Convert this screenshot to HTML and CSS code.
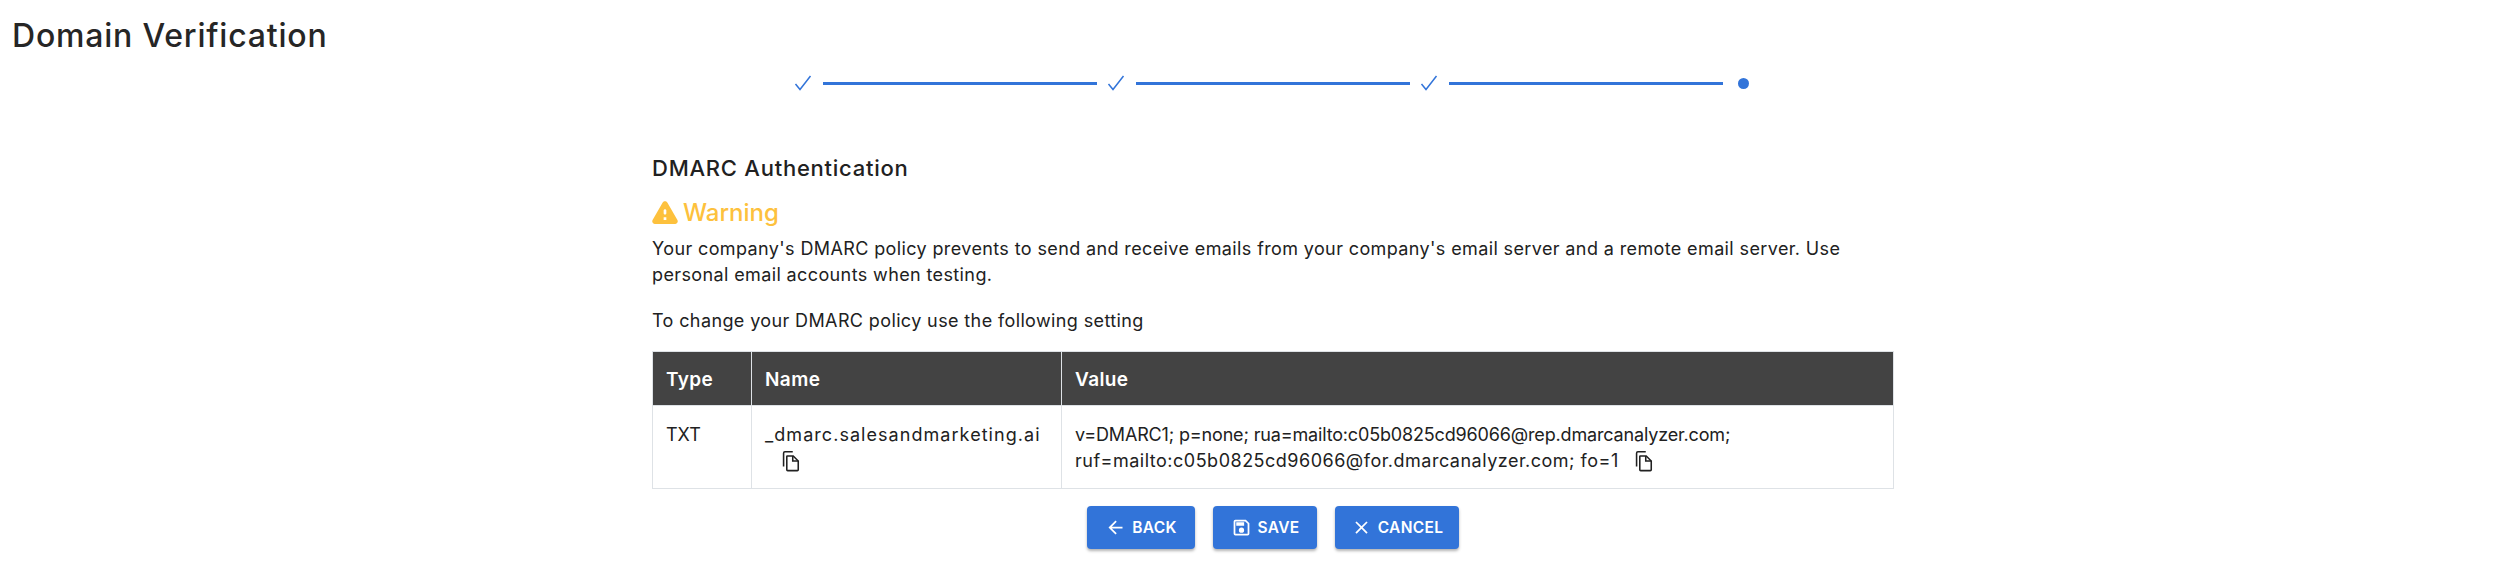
FILE: index.html
```html
<!DOCTYPE html>
<html lang="en">
<head>
    <meta charset="UTF-8" />
    <title>Domain Verification</title>
    <link rel="stylesheet" href="styles.css">
</head>
<body>
    <h1 class="page-title">Domain Verification</h1>

    <div class="stepper">
        <svg class="step-check" viewBox="0 0 18 18"><path d="M1.5 10 L6 15.5 L16.5 2"/></svg>
        <div class="step-line"></div>
        <svg class="step-check" viewBox="0 0 18 18"><path d="M1.5 10 L6 15.5 L16.5 2"/></svg>
        <div class="step-line"></div>
        <svg class="step-check" viewBox="0 0 18 18"><path d="M1.5 10 L6 15.5 L16.5 2"/></svg>
        <div class="step-line"></div>
        <div class="step-dot"></div>
    </div>

    <div class="content">
        <h2 class="section-title">DMARC Authentication</h2>
        <div class="warning">
            <svg class="warning-icon" viewBox="2.3 3.9 19.4 17.1"><path d="M4.47 21h15.06c1.54 0 2.5-1.67 1.73-3L13.73 4.99c-.77-1.33-2.69-1.33-3.46 0L2.74 18c-.77 1.33.19 3 1.73 3zM12 14c-.55 0-1-.45-1-1v-2c0-.55.45-1 1-1s1 .45 1 1v2c0 .55-.45 1-1 1zm1 4h-2v-2h2v2z"/></svg>
            <span>Warning</span>
        </div>
        <p class="note">Your company's DMARC policy prevents to send and receive emails from your company's email server and a remote email server. Use personal email accounts when testing.</p>
        <p class="note note-setting">To change your DMARC policy use the following setting</p>

        <table class="dns-table">
            <thead>
                <tr>
                    <th class="col-type">Type</th>
                    <th class="col-name">Name</th>
                    <th>Value</th>
                </tr>
            </thead>
            <tbody>
                <tr>
                    <td>TXT</td>
                    <td class="cell-name">_dmarc.salesandmarketing.ai<br>
                        <svg class="copy-icon copy-below" viewBox="0 0 24 24"><path d="M15 2H6.5A1.5 1.5 0 0 0 5 3.5V18"/><path d="M9 6.5h6.5L21 12v9.5a1 1 0 0 1-1 1H9.5a1 1 0 0 1-1-1V7a.5.5 0 0 1 .5-.5z"/><path d="M15 6.5V12h6"/></svg>
                    </td>
                    <td class="cell-value">v=DMARC1; p=none; rua=mailto:c05b0825cd96066@rep.dmarcanalyzer.com;<br>
                        <span class="value-second">ruf=mailto:c05b0825cd96066@for.dmarcanalyzer.com; fo=1</span>
                        <svg class="copy-icon copy-inline" viewBox="0 0 24 24"><path d="M15 2H6.5A1.5 1.5 0 0 0 5 3.5V18"/><path d="M9 6.5h6.5L21 12v9.5a1 1 0 0 1-1 1H9.5a1 1 0 0 1-1-1V7a.5.5 0 0 1 .5-.5z"/><path d="M15 6.5V12h6"/></svg>
                    </td>
                </tr>
            </tbody>
        </table>

        <div class="actions">
            <button class="btn btn-back">
                <svg viewBox="0 0 24 24"><path d="M20 11H7.83l5.59-5.59L12 4l-8 8 8 8 1.41-1.41L7.83 13H20v-2z"/></svg>
                Back
            </button>
            <button class="btn btn-save">
                <svg viewBox="0 0 24 24"><path d="M17 3H5a2 2 0 0 0-2 2v14a2 2 0 0 0 2 2h14a2 2 0 0 0 2-2V7l-4-4zm2 16H5V5h11.17L19 7.83V19zm-7-7a3 3 0 1 0 0 6 3 3 0 0 0 0-6zM6 6h9v4H6V6z"/></svg>
                Save
            </button>
            <button class="btn btn-cancel">
                <svg viewBox="0 0 24 24"><path d="M19 6.41 17.59 5 12 10.59 6.41 5 5 6.41 10.59 12 5 17.59 6.41 19 12 13.41 17.59 19 19 17.59 13.41 12z"/></svg>
                Cancel
            </button>
        </div>
    </div>
</body>
</html>
```

FILE: styles.css
```css
body {
    margin: 0;
    background-color: #fff;
    color: #212121;
    font-family: Inter, "Noto Sans", Arial, sans-serif;
    height: 580px;
    overflow: hidden;
}
.page-title {
    margin: 0;
    padding: 14px 0 0 12px;
    font-size: 32px;
    line-height: 44px;
    font-weight: 500;
    letter-spacing: 0.8px;
    color: #262626;
}
.stepper {
    display: flex;
    align-items: center;
    margin: 7px 0 0 794px;
    height: 36px;
}
.step-check {
    width: 18px;
    height: 18px;
    flex: none;
}
.step-check path {
    fill: none;
    stroke: #3274d9;
    stroke-width: 1.5;
}
.step-line {
    flex: none;
    width: 274px;
    height: 3px;
    margin: 0 10px 0 11px;
    background-color: #3274d9;
}
.step-dot {
    flex: none;
    width: 11px;
    height: 11px;
    margin-left: 5px;
    border-radius: 50%;
    background-color: #3274d9;
}
.content {
    width: 1242px;
    margin: 0 0 0 652px;
}
.section-title {
    margin: 52px 0 0;
    font-size: 22px;
    line-height: 30px;
    font-weight: 500;
    letter-spacing: 0.75px;
    color: #212121;
}
.warning {
    display: flex;
    align-items: center;
    gap: 5px;
    margin-top: 11px;
    height: 36px;
    font-size: 24px;
    font-weight: 500;
    color: #fdc13d;
}
.warning-icon {
    width: 26px;
    height: 23px;
    fill: #fdc13d;
}
.note {
    margin: 6px 0 0;
    font-size: 18px;
    line-height: 26px;
    letter-spacing: 0.38px;
    color: #212121;
}
.note-setting {
    margin-top: 20px;
}
.dns-table {
    width: 1242px;
    margin-top: 17px;
    border-collapse: collapse;
    table-layout: fixed;
    font-size: 18px;
    line-height: 26px;
}
.dns-table th {
    height: 51px;
    padding: 2px 13px 0;
    border: 1px solid #dee2e6;
    background-color: #434343;
    color: #fff;
    font-size: 19px;
    letter-spacing: 0.4px;
    text-align: left;
    font-weight: 600;
}
.dns-table td {
    box-sizing: border-box;
    height: 83px;
    padding: 16px 13px 0;
    border: 1px solid #dee2e6;
    vertical-align: top;
    color: #212121;
}
.col-type {
    width: 72px;
}
.col-name {
    width: 283px;
}
.cell-name {
    letter-spacing: 1.05px;
}
.cell-value {
    letter-spacing: -0.16px;
}
.value-second {
    letter-spacing: 0.5px;
}
.copy-icon {
    width: 22px;
    height: 22px;
    fill: none;
    stroke: #212121;
    stroke-width: 1.7;
    vertical-align: -5px;
}
.copy-below {
    margin-left: 14px;
}
.copy-inline {
    margin-left: 8px;
}
.actions {
    display: flex;
    justify-content: center;
    gap: 18px;
    margin-top: 17px;
}
.btn {
    display: flex;
    align-items: center;
    justify-content: center;
    gap: 6px;
    height: 43px;
    padding: 0;
    border: none;
    border-radius: 4px;
    background-color: #3274d9;
    color: #fff;
    font-family: inherit;
    font-size: 15.5px;
    font-weight: 600;
    letter-spacing: 0.3px;
    text-transform: uppercase;
    box-shadow: 0 2px 3px rgba(0, 0, 0, 0.3);
}
.btn svg {
    width: 21px;
    height: 21px;
    fill: #fff;
}
.btn-back {
    width: 108px;
}
.btn-save {
    width: 104px;
}
.btn-cancel {
    width: 124px;
}
```
